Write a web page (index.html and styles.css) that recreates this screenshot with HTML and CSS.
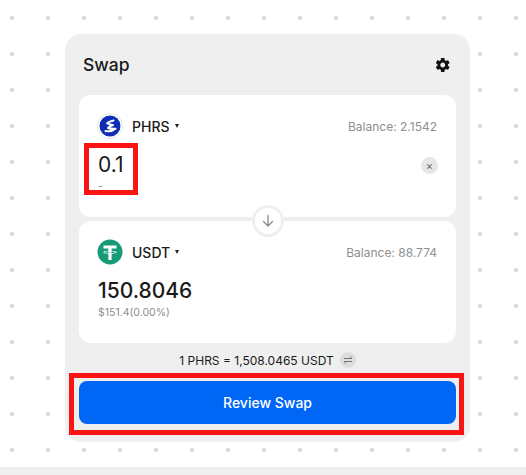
FILE: index.html
```html
<!DOCTYPE html>
<html lang="en">
<head>
    <meta charset="UTF-8">
    <title>Swap</title>
    <link rel="stylesheet" href="styles.css">
</head>
<body>
    <div class="page">
        <div class="swap-card">
            <div class="swap-header">
                <h2>Swap</h2>
                <svg class="gear" width="16" height="16" viewBox="0 0 24 24">
                    <path fill="#111" d="M19.4 13c.04-.32.07-.66.07-1s-.03-.68-.07-1l2.2-1.7c.2-.16.25-.43.13-.66l-2.1-3.6c-.13-.23-.4-.32-.64-.23l-2.6 1.04c-.54-.41-1.13-.76-1.76-1.02L14.2 2.1c-.04-.25-.26-.43-.51-.43H9.5c-.25 0-.47.18-.51.43l-.4 2.730c-.63.26-1.22.61-1.760 1.020L4.200 4.810c-.24-.09-.51 0-.64.23l-2.100 3.600c-.13.23-.07.5.13.66L3.800 11c-.04.32-.07.66-.07 1s.03.68.07 1l-2.200 1.700c-.2.16-.26.43-.13.66l2.100 3.600c.13.23.4.32.64.23l2.630-1.040c.54.41 1.130.76 1.760 1.020l.4 2.730c.04.25.26.43.51.43h4.190c.25 0 .47-.18.51-.43l.4-2.730c.63-.26 1.220-.61 1.760-1.020l2.600 1.040c.24.09.51 0 .64-.23l2.100-3.600c.12-.23.07-.5-.13-.66L19.400 13zM11.600 15.600c-2 0-3.600-1.600-3.600-3.600s1.600-3.600 3.600-3.600 3.600 1.600 3.600 3.600-1.600 3.600-3.600 3.600z"/>
                </svg>
            </div>

            <div class="token-box">
                <div class="token-row">
                    <div class="token">
                        <svg class="token-icon" width="26" height="26" viewBox="0 0 26 26">
                            <circle cx="13" cy="13" r="12.5" fill="#fff" stroke="#e6e6e6"/>
                            <circle cx="13" cy="13" r="10.5" fill="#0f2cb4"/>
                            <path fill="none" stroke="#fff" stroke-width="2" stroke-linecap="round" stroke-linejoin="round" d="M16.500 7.500C14 8 11.500 9 10 10.200c2 1.300 4 1.300 6 1.800-2 .8-3.800 1.800-5 3 2 1 4 1 7.500.8-2.500 2-6 3-10 2.200"/>
                        </svg>
                        <span class="symbol">PHRS</span>
                        <span class="caret"></span>
                    </div>
                    <span class="balance">Balance: 2.1542</span>
                </div>
                <div class="amount-row">
                    <div class="amount-wrap">
                        <div class="amount">0.1</div>
                        <div class="usd">-</div>
                        <div class="mark-amount"></div>
                    </div>
                    <span class="clear">&#215;</span>
                </div>
            </div>

            <div class="flip">
                <svg width="14" height="14" viewBox="0 0 14 14">
                    <path fill="none" stroke="#8a8a8a" stroke-width="1.3" stroke-linecap="round" stroke-linejoin="round" d="M7 1.500v10.500M2.500 7.500 7 12l4.500-4.500"/>
                </svg>
            </div>

            <div class="token-box">
                <div class="token-row">
                    <div class="token">
                        <svg class="token-icon" width="26" height="26" viewBox="0 0 26 26">
                            <circle cx="13" cy="13" r="12.500" fill="#179a77"/>
                            <path fill="#fff" d="M6.500 6.500h13v3h-4.900v2.300c2.900.15 5.100.75 5.100 1.450s-2.200 1.300-5.100 1.450V21h-3.200v-6.300c-2.900-.15-5.100-.75-5.100-1.450s2.200-1.300 5.100-1.450V9.500H6.500zM11.400 12.600c-2.300.1-4 .45-4 .75 0 .4 2.500.75 5.600.75s5.600-.35 5.600-.75c0-.3-1.700-.65-4-.75v1.050c-.5.03-1 .05-1.600.05s-1.100-.02-1.600-.05z"/>
                        </svg>
                        <span class="symbol">USDT</span>
                        <span class="caret"></span>
                    </div>
                    <span class="balance">Balance: 88.774</span>
                </div>
                <div class="amount-row">
                    <div class="amount-wrap">
                        <div class="amount amount-out">150.8046</div>
                        <div class="usd">$151.4(0.00%)</div>
                    </div>
                </div>
            </div>

            <div class="rate">
                <span>1 PHRS = 1,508.0465 USDT</span>
                <span class="rate-flip">
                    <svg width="10" height="10" viewBox="0 0 10 10">
                        <path fill="none" stroke="#777" stroke-width="1" d="M1 3.500h8L6.800 1.500M9 6.500H1l2.200 2"/>
                    </svg>
                </span>
            </div>

            <div class="review-wrap">
                <button class="review">Review Swap</button>
            </div>
        </div>
    </div>
    <div class="footer-bar"></div>
</body>
</html>
```

FILE: styles.css
```css
:root {
    --panel: #efefef;
    --text: #1a1a1a;
    --muted: #8f8f8f;
    --blue: #0066f5;
    --mark: #fb1414;
}
html, body {
    height: 100%;
}
body {
    margin: 0;
    height: 475px;
    overflow: hidden;
    display: flex;
    flex-direction: column;
    font-family: Inter, "Noto Sans", sans-serif;
    color: var(--text);
    background-color: #fff;
}
.page {
    height: 467px;
    padding: 34px 0 0 65px;
    box-sizing: border-box;
    background-image: radial-gradient(circle, #d9d9d9 1.8px, transparent 2.4px);
    background-size: 36px 36px;
    background-position: -6px 0;
}
.footer-bar {
    flex: 1;
    background: var(--panel);
}
.swap-card {
    position: relative;
    width: 405px;
    height: 408px;
    box-sizing: border-box;
    padding: 0 14px;
    background: var(--panel);
    border-radius: 16px;
}
.swap-header {
    height: 61px;
    display: flex;
    align-items: center;
    justify-content: space-between;
    padding: 0 5px 0 4px;
}
.swap-header h2 {
    margin: 0;
    font-size: 17.5px;
    font-weight: 500;
}
.token-box {
    height: 122px;
    margin-bottom: 4px;
    padding: 18px 18px 0 19px;
    box-sizing: border-box;
    background: #fff;
    border-radius: 12px;
}
.token-row {
    height: 26px;
    display: flex;
    align-items: center;
    justify-content: space-between;
}
.token {
    display: flex;
    align-items: center;
}
.token-icon {
    margin: 0 9px 0 -1px;
}
.symbol {
    font-size: 14px;
    font-weight: 500;
}
.caret {
    margin-left: 5px;
    border-left: 2.5px solid transparent;
    border-right: 2.5px solid transparent;
    border-top: 4px solid #222;
}
.balance {
    margin-right: 1px;
    font-size: 12px;
    color: var(--muted);
}
.amount-row {
    display: flex;
    align-items: center;
    justify-content: space-between;
    margin-top: 12px;
}
.amount-wrap {
    position: relative;
}
.amount {
    font-size: 21px;
    font-weight: 400;
    line-height: 28px;
}
.amount-out {
    font-weight: 500;
}
.usd {
    margin-top: 1px;
    font-size: 10.500px;
    line-height: 14px;
    color: var(--muted);
}
.mark-amount {
    position: absolute;
    left: -14px;
    top: -8px;
    width: 54px;
    height: 52px;
    box-sizing: border-box;
    border: 5px solid var(--mark);
}
.clear {
    width: 17px;
    height: 17px;
    margin-bottom: 14px;
    display: flex;
    align-items: center;
    justify-content: center;
    font-size: 11px;
    color: #666;
    background: #e6e6e6;
    border-radius: 50%;
}
.flip {
    position: absolute;
    left: 187px;
    top: 171px;
    width: 32px;
    height: 32px;
    display: flex;
    align-items: center;
    justify-content: center;
    box-sizing: border-box;
    background: #fff;
    border: 3px solid var(--panel);
    border-radius: 50%;
}
.rate {
    height: 26px;
    display: flex;
    align-items: center;
    justify-content: center;
    gap: 6px;
    font-size: 12px;
}
.rate-flip {
    width: 16px;
    height: 16px;
    display: flex;
    align-items: center;
    justify-content: center;
    background: #dedede;
    border-radius: 50%;
}
.review-wrap {
    margin: 0 -8px 0 -10px;
    padding: 3px 3px 6px 5px;
    border: 5px solid var(--mark);
}
.review {
    display: block;
    width: 100%;
    height: 43px;
    font-family: inherit;
    font-size: 14px;
    font-weight: 500;
    color: #fff;
    background: var(--blue);
    border: none;
    border-radius: 8px;
}
```
